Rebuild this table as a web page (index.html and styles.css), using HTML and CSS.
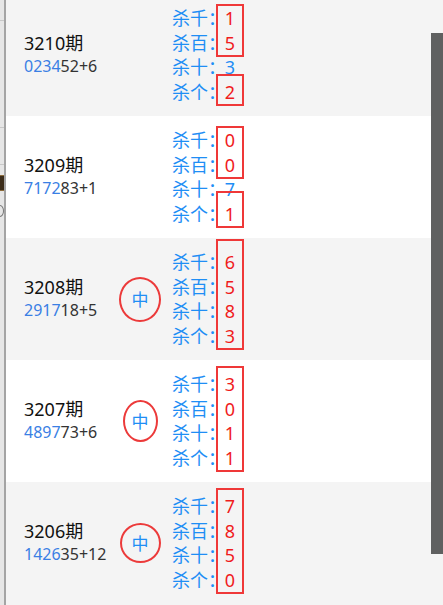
FILE: index.html
```html
<!DOCTYPE html>
<html lang="zh-CN">
<head>
<meta charset="utf-8">
<title>杀码</title>
<link rel="stylesheet" href="styles.css">
</head>
<body>
<div class="screen">
  <div class="backdrop">
    <div class="bd-gap bd-gap--a"></div>
    <div class="bd-line"></div>
    <div class="bd-gap bd-gap--b"></div>
    <div class="bd-line"></div>
    <div class="bd-gap bd-gap--c"></div>
    <div class="bd-line"></div>
    <div class="bd-gap bd-gap--d"></div>
    <div class="bd-dark"></div>
    <div class="bd-gap bd-gap--e"></div>
    <div class="bd-icon"></div>
  </div>

  <main class="panel">
    <section class="row row--grey row--first">
      <div class="issue">
        <div class="issue-no">3210期</div>
        <div class="draw"><span class="hit">0234</span>52+6</div>
      </div>
      <div class="mark"></div>
      <ul class="labels"><li>杀千：</li><li>杀百：</li><li>杀十：</li><li>杀个：</li></ul>
      <div class="vals">
        <div class="box box--snug"><span class="val">1</span><span class="val">5</span></div>
        <span class="val val--plain">3</span>
        <div class="box"><span class="val">2</span></div>
      </div>
    </section>

    <section class="row">
      <div class="issue">
        <div class="issue-no">3209期</div>
        <div class="draw"><span class="hit">7172</span>83+1</div>
      </div>
      <div class="mark"></div>
      <ul class="labels"><li>杀千：</li><li>杀百：</li><li>杀十：</li><li>杀个：</li></ul>
      <div class="vals">
        <div class="box box--snug"><span class="val">0</span><span class="val">0</span></div>
        <span class="val val--plain">7</span>
        <div class="box box--tall"><span class="val">1</span></div>
      </div>
    </section>

    <section class="row row--grey">
      <div class="issue">
        <div class="issue-no">3208期</div>
        <div class="draw"><span class="hit">2917</span>18+5</div>
      </div>
      <div class="mark"><span class="ring">中</span></div>
      <ul class="labels"><li>杀千：</li><li>杀百：</li><li>杀十：</li><li>杀个：</li></ul>
      <div class="vals">
        <div class="box box--tall"><span class="val">6</span><span class="val">5</span><span class="val">8</span><span class="val">3</span></div>
      </div>
    </section>

    <section class="row">
      <div class="issue">
        <div class="issue-no">3207期</div>
        <div class="draw"><span class="hit">4897</span>73+6</div>
      </div>
      <div class="mark"><span class="ring ring--narrow">中</span></div>
      <ul class="labels"><li>杀千：</li><li>杀百：</li><li>杀十：</li><li>杀个：</li></ul>
      <div class="vals">
        <div class="box"><span class="val">3</span><span class="val">0</span><span class="val">1</span><span class="val">1</span></div>
      </div>
    </section>

    <section class="row row--grey">
      <div class="issue">
        <div class="issue-no">3206期</div>
        <div class="draw"><span class="hit">1426</span>35+12</div>
      </div>
      <div class="mark"><span class="ring ring--round">中</span></div>
      <ul class="labels"><li>杀千：</li><li>杀百：</li><li>杀十：</li><li>杀个：</li></ul>
      <div class="vals">
        <div class="box"><span class="val">7</span><span class="val">8</span><span class="val">5</span><span class="val">0</span></div>
      </div>
    </section>
  </main>

  <div class="scrollbar"></div>
</div>
</body>
</html>
```

FILE: styles.css
```css
* { box-sizing: border-box; }

html, body {
  margin: 0;
  padding: 0;
  width: 443px;
  height: 605px;
  overflow: hidden;
  background: #f4f4f4;
  font-family: "Noto Sans", "Noto Sans CJK SC", sans-serif;
}

.screen {
  position: relative;
  display: flex;
  width: 443px;
  height: 605px;
  overflow: hidden;
}

/* the page behind the panel, visible as a thin strip */
.backdrop {
  flex: 0 0 6px;
  display: flex;
  flex-direction: column;
  background: #e6e6e6;
  border-right: 2px solid #a4a4a4;
}
.bd-gap--a { height: 20px; }
.bd-gap--b { height: 106px; }
.bd-gap--c { height: 36px; }
.bd-gap--d { height: 10px; }
.bd-gap--e { height: 14px; }
.bd-line { height: 1px; background: #c8c8c8; }
.bd-dark { height: 16px; background: #3b2c19; border-top: 1px solid #8a6a3a; border-bottom: 1px solid #8a6a3a; }
.bd-icon { width: 8px; height: 12px; border: 1px solid #777; border-radius: 50%; margin-left: -4px; }

.panel {
  flex: 1;
  display: flex;
  flex-direction: column;
}

.row {
  flex: 0 0 122px;
  display: grid;
  grid-template-columns: 92px 48px 52px 28px;
  align-items: center;
  padding-left: 18px;
  background: #ffffff;
}
.row--grey { background: #f4f4f4; }
.row--first { margin-top: -6px; }

.issue-no {
  font-size: 18px;
  line-height: 23.5px;
  color: #111;
  white-space: nowrap;
}
.draw {
  font-size: 16px;
  line-height: 23.5px;
  color: #333;
  white-space: nowrap;
}
.hit { color: #3a7fe4; }

.mark {
  display: flex;
  justify-content: center;
  align-items: center;
}
.ring {
  width: 42px;
  height: 45px;
  border: 2.5px solid #ec3a3a;
  border-radius: 50%;
  display: flex;
  justify-content: center;
  align-items: center;
  color: #1f8ef5;
  font-size: 17px;
  line-height: 1;
}
.ring--narrow { width: 35px; height: 42px; }
.ring--round { width: 41px; height: 40px; }

.labels {
  list-style: none;
  margin: 0;
  padding: 0 0 0 8px;
  color: #1f8ef5;
  font-size: 18px;
  line-height: 24.5px;
  white-space: nowrap;
}

.vals {
  display: flex;
  flex-direction: column;
  width: 28px;
}
.val {
  display: block;
  font-size: 18px;
  line-height: 24.5px;
  text-align: center;
  color: #f01c1c;
}
.val--plain { color: #1f8ef5; }

.box {
  border: 2px solid #ef3838;
  margin-top: -6px;
  padding-top: 4px;
  margin-bottom: -2px;
}
.box--snug { margin-top: -2px; padding-top: 0; }
.box--tall { margin-top: -11px; padding-top: 9px; }

.scrollbar {
  position: absolute;
  right: 0;
  top: 33px;
  width: 12px;
  height: 521px;
  background: #5f6060;
}
```
